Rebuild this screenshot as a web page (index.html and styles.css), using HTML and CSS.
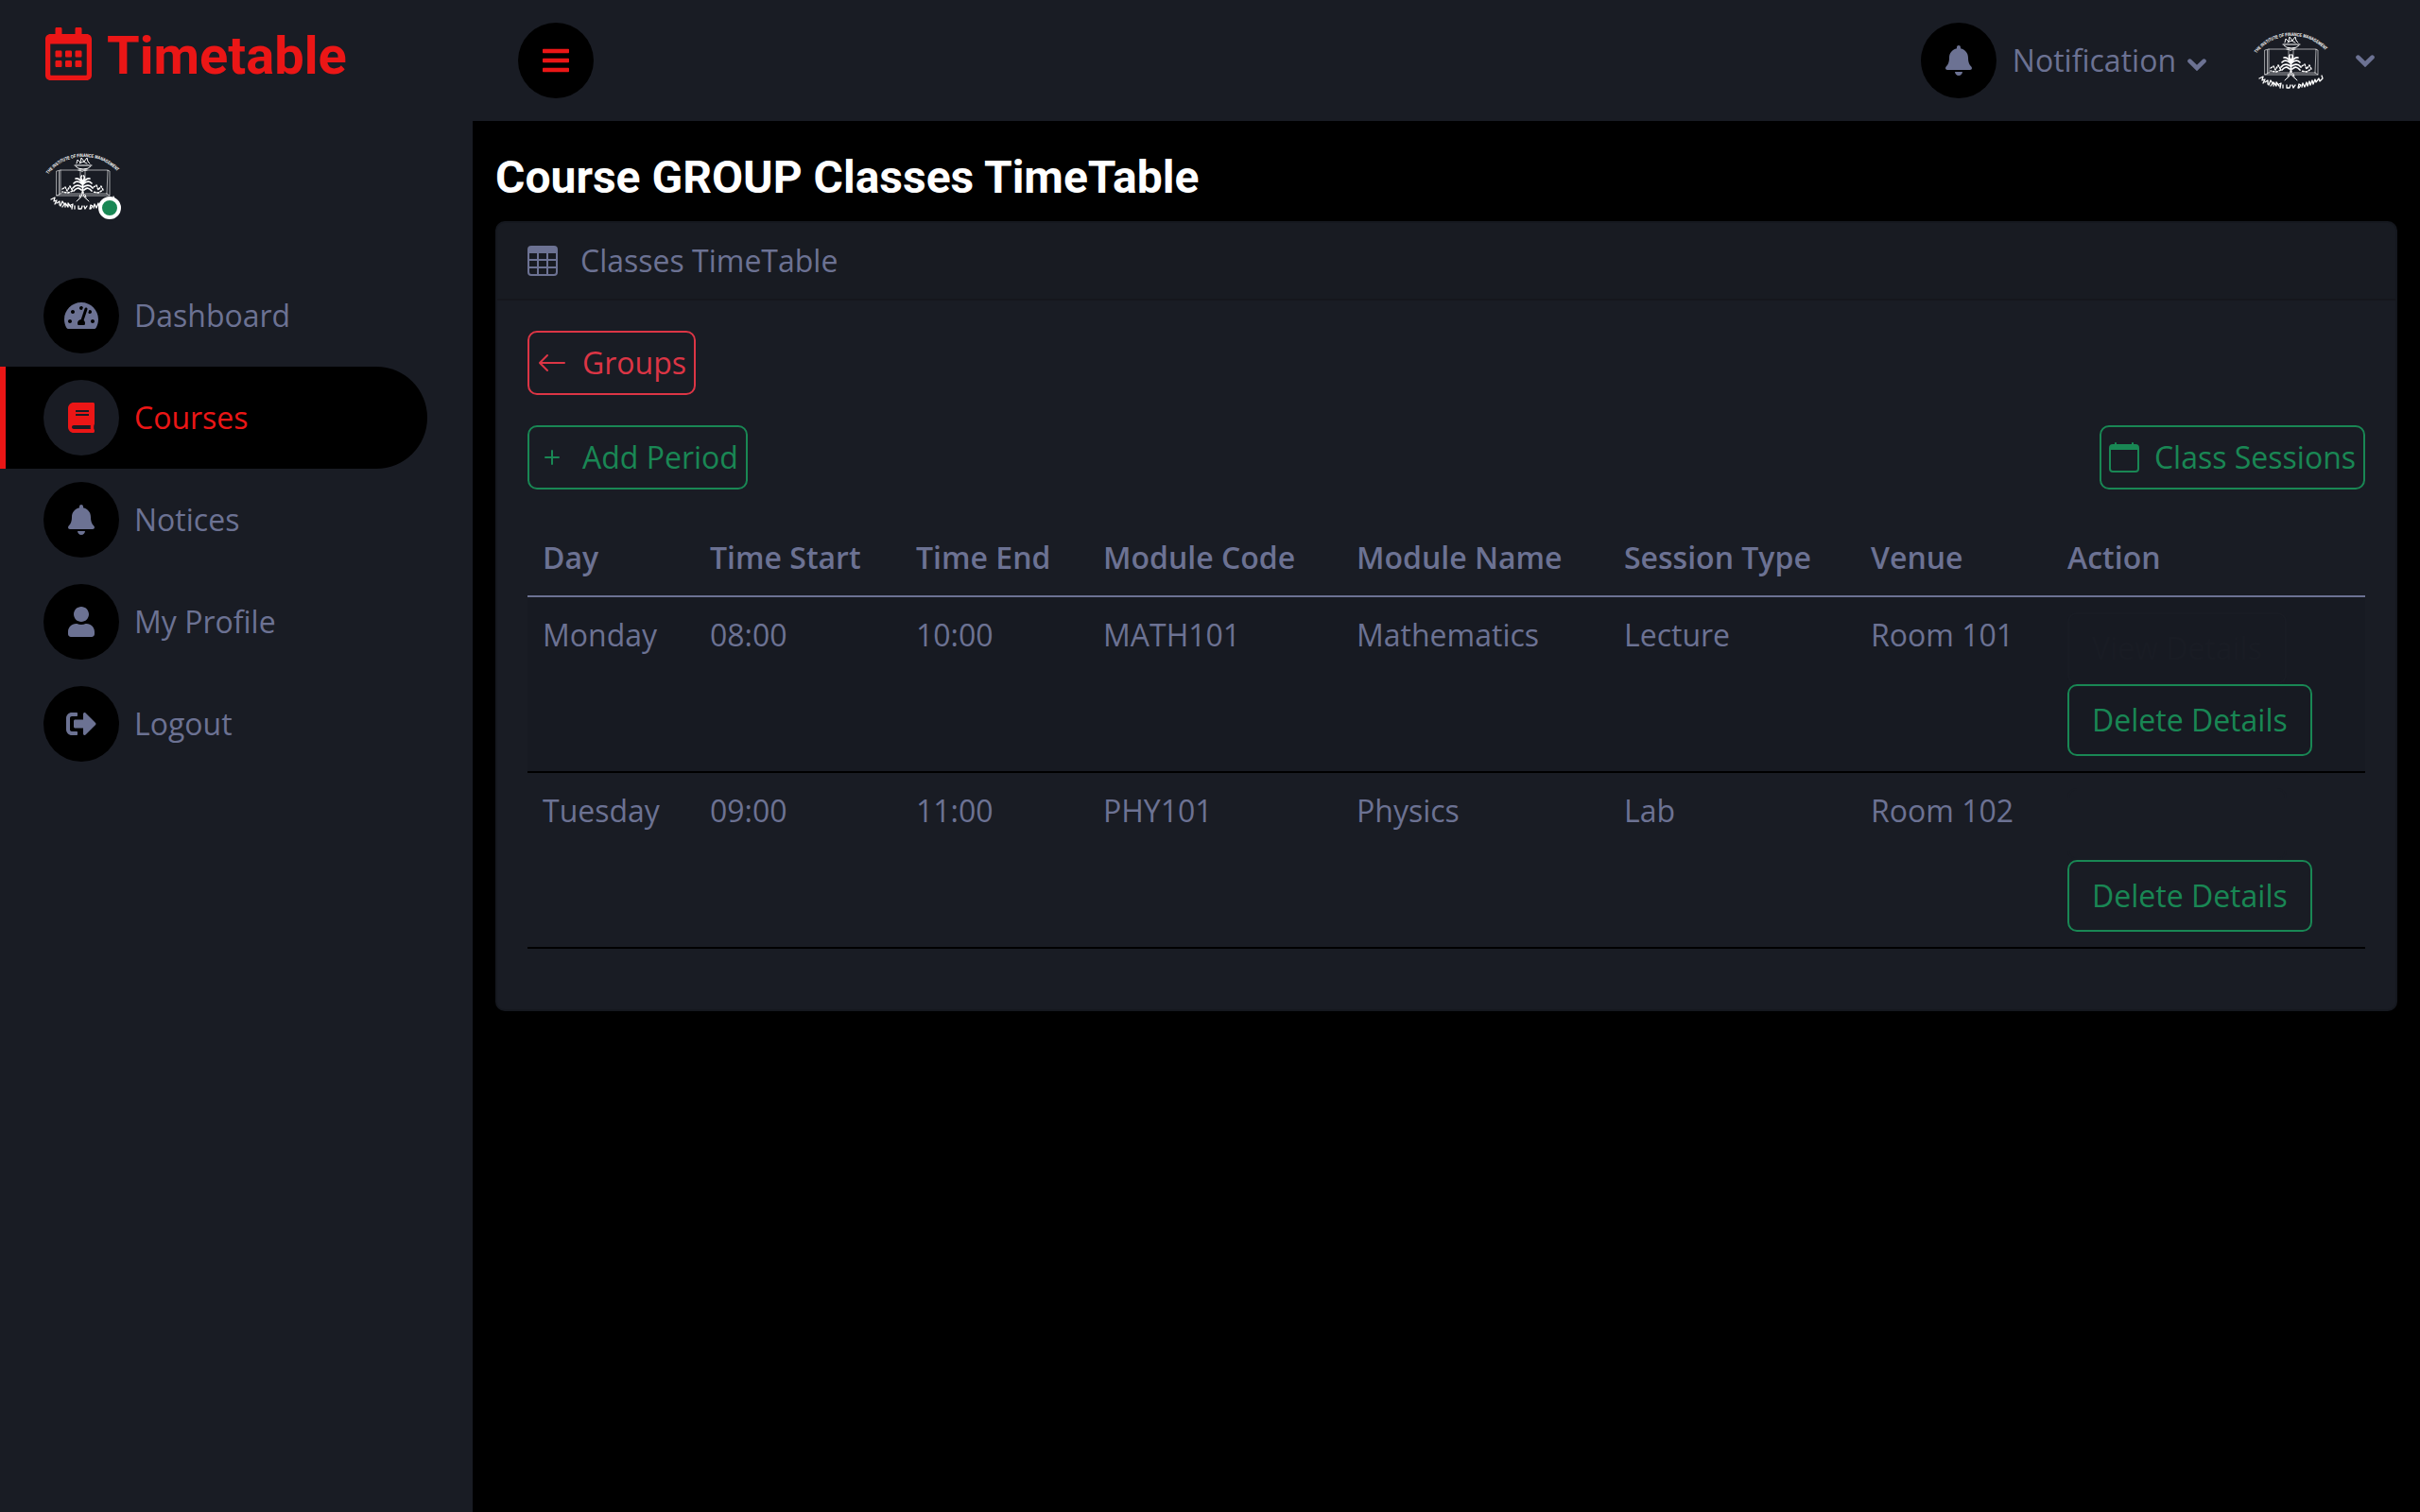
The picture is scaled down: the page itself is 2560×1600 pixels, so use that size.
FILE: index.html
```html
<!DOCTYPE html>
<html lang="en">
<head>
<meta charset="utf-8">
<title>Timetable</title>
<link rel="stylesheet" href="styles.css">
</head>
<body>
<svg class="defs" width="0" height="0" aria-hidden="true">
  <defs>
    <symbol id="bell" viewBox="0 0 448 512"><path d="M224 512c35.32 0 63.97-28.65 63.97-64H160.03c0 35.35 28.65 64 63.97 64zm215.39-149.71c-19.32-20.76-55.47-51.99-55.47-154.29 0-77.7-54.48-139.9-127.94-155.16V32c0-17.67-14.32-32-31.98-32s-31.98 14.33-31.98 32v20.84C118.56 68.1 64.08 130.3 64.08 208c0 102.3-36.15 133.53-55.47 154.29-6 6.45-8.66 14.16-8.61 21.71.11 16.4 12.98 32 32.1 32h383.8c19.12 0 32-15.6 32.1-32 .05-7.55-2.61-15.27-8.61-21.71z"/></symbol>
    <symbol id="chevron" viewBox="0 0 20 13"><path d="M2.500 2.700L10 10L17.500 2.700" fill="none" stroke="currentColor" stroke-width="4.600" stroke-linecap="round"/></symbol>
    <symbol id="crest" viewBox="0 0 80 80">
      <path id="crest-arc" d="M3 32.500Q18 14 40.500 14T79 32.500" fill="none"/>
      <text class="crest-text" textLength="83" lengthAdjust="spacingAndGlyphs"><textPath href="#crest-arc" textLength="83" lengthAdjust="spacingAndGlyphs">THE INSTITUTE OF FINANCE MANAGEMENT</textPath></text>
      <g fill="none" stroke="#fff" stroke-linecap="round" stroke-linejoin="round">
        <path stroke-width=".8" opacity=".75" d="M12 29l4-1h18q4 0 5 2q1-2 5-2h21l3 1v26H42l-2 1-2-1H12zM16 28v25M14.500 29v25M66 28l-1 25M16 53h22l2 1.500 2-1.500h23M12 55l4-2M68 55l-3-2M37 27v10M42 27v10"/>
        <path stroke-width="1" d="M31 23h18M32 24q2 3 8 3t8-3M33 21l1-4 3 3 1-5 3 4 3-4 1 4 2 2M36 21l4-2 4 2M35 28h9"/>
        <path stroke-width="1.700" d="M39.500 52V40M39 43q-5-5-9-1M39 41q-4-5-7-4M40 43q5-5 9-1M40 41q4-5 7-4M39 46q-6-4-10 1M40 46q6-4 10 1M38 49q-4-4-8 1M41 49q4-4 8 1M39.500 40q-3-4-1-6M39.500 40q3-4 1-6"/>
        <path stroke-width="1" d="M39 51q0 6-4 8l-2 2M40 51q0 6 4 8l2 2M37 54l-1 3M42 54l1 3"/>
        <path stroke-width="1.500" stroke-dasharray="1.600 1.800" d="M18 48l3-2 2 4 3-5 3 5-5 2-6-1M51 46l3-2 2 5 3-4 2 4-5 3-6-1"/>
        <path stroke-width="1.300" d="M6 59l4-2-1 4 3-1-2 4M12 63l3-2v4M16 66l2-5 2 3-2 3M21 67v-4l3 4v-4l3 4M27 65l2-1-1 5M31 66v3M35 66v3h3l1-3M41 66l1 3 2-3M47 69l1-4 2 1-2 3M51 68l1-4 2 4 2-5 1 4 2-5 1 4 2-5 1 4 2-5 1 3 3-4 1 3 3-3-1-3"/>
      </g>
    </symbol>
  </defs>
</svg>
<div class="layout">
  <aside class="sidebar">
    <h3 class="brand">
      <svg class="brand-icon" viewBox="0 0 448 512"><path d="M148 288h-40c-6.600 0-12-5.400-12-12v-40c0-6.600 5.400-12 12-12h40c6.600 0 12 5.400 12 12v40c0 6.600-5.400 12-12 12zm108-12v-40c0-6.600-5.400-12-12-12h-40c-6.600 0-12 5.400-12 12v40c0 6.600 5.400 12 12 12h40c6.600 0 12-5.400 12-12zm96 0v-40c0-6.600-5.400-12-12-12h-40c-6.600 0-12 5.400-12 12v40c0 6.600 5.400 12 12 12h40c6.600 0 12-5.400 12-12zm-96 96v-40c0-6.600-5.400-12-12-12h-40c-6.600 0-12 5.400-12 12v40c0 6.600 5.400 12 12 12h40c6.600 0 12-5.400 12-12zm-96 0v-40c0-6.600-5.400-12-12-12h-40c-6.600 0-12 5.400-12 12v40c0 6.600 5.400 12 12 12h40c6.600 0 12-5.400 12-12zm192 0v-40c0-6.600-5.400-12-12-12h-40c-6.600 0-12 5.400-12 12v40c0 6.600 5.400 12 12 12h40c6.600 0 12-5.400 12-12zm96-260v352c0 26.500-21.500 48-48 48H48c-26.500 0-48-21.500-48-48V112c0-26.500 21.500-48 48-48h48V12c0-6.600 5.400-12 12-12h40c6.600 0 12 5.400 12 12v52h128V12c0-6.600 5.400-12 12-12h40c6.600 0 12 5.400 12 12v52h48c26.500 0 48 21.500 48 48zm-48 346V160H48v298c0 3.300 2.700 6 6 6h340c3.300 0 6-2.700 6-6z"/></svg>
      <span>Timetable</span>
    </h3>
    <div class="user">
      <svg class="avatar"><use href="#crest"/></svg>
      <span class="status"></span>
    </div>
    <nav class="menu">
      <a class="menu-item"><span class="disc"><svg class="w36" viewBox="0 0 576 512"><path d="M288 32C128.940 32 0 160.940 0 320c0 52.800 14.250 102.260 39.060 144.800 5.610 9.620 16.300 15.200 27.440 15.200h443c11.140 0 21.830-5.580 27.440-15.200C561.750 422.260 576 372.800 576 320c0-159.060-128.940-288-288-288zm0 64c14.710 0 26.580 10.130 30.320 23.650-1.110 2.260-2.640 4.230-3.450 6.670l-9.220 27.670c-5.130 3.490-10.970 6.010-17.640 6.010-17.670 0-32-14.330-32-32S270.330 96 288 96zM96 384c-17.670 0-32-14.330-32-32s14.330-32 32-32 32 14.330 32 32-14.330 32-32 32zm48-160c-17.670 0-32-14.330-32-32s14.330-32 32-32 32 14.330 32 32-14.330 32-32 32zm246.770-72.410l-61.330 184C343.130 347.330 352 364.540 352 384c0 11.720-3.380 22.550-8.880 32H232.880c-5.500-9.450-8.880-20.280-8.880-32 0-33.940 26.500-61.430 59.900-63.590l61.340-184.010c4.170-12.560 17.730-19.450 30.360-15.170 12.570 4.190 19.350 17.790 15.170 30.360zm14.660 57.200l15.520-46.550c3.470-1.290 7.130-2.230 11.050-2.230 17.670 0 32 14.330 32 32s-14.330 32-32 32c-11.380-.01-20.890-6.280-26.570-15.220zM480 384c-17.670 0-32-14.330-32-32s14.330-32 32-32 32 14.330 32 32-14.330 32-32 32z"/></svg></span>Dashboard</a>
      <a class="menu-item active"><span class="disc"><svg class="w28" viewBox="0 0 448 512"><path d="M448 360V24c0-13.300-10.700-24-24-24H96C43 0 0 43 0 96v320c0 53 43 96 96 96h328c13.300 0 24-10.700 24-24v-16c0-7.500-3.500-14.300-8.900-18.700-4.200-15.400-4.200-59.300 0-74.700 5.400-4.300 8.900-11.100 8.900-18.600zM128 134c0-3.300 2.700-6 6-6h212c3.300 0 6 2.700 6 6v20c0 3.300-2.700 6-6 6H134c-3.300 0-6-2.700-6-6v-20zm0 64c0-3.300 2.700-6 6-6h212c3.300 0 6 2.700 6 6v20c0 3.300-2.700 6-6 6H134c-3.300 0-6-2.700-6-6v-20zm253.400 250H96c-17.700 0-32-14.300-32-32 0-17.600 14.400-32 32-32h285.400c-1.900 17.100-1.900 46.900 0 64z"/></svg></span>Courses</a>
      <a class="menu-item"><span class="disc"><svg class="w28"><use href="#bell"/></svg></span>Notices</a>
      <a class="menu-item"><span class="disc"><svg class="w28" viewBox="0 0 448 512"><path d="M224 256c70.700 0 128-57.300 128-128S294.700 0 224 0 96 57.300 96 128s57.300 128 128 128zm89.600 32h-16.700c-22.200 10.200-46.900 16-72.900 16s-50.600-5.800-72.900-16h-16.700C60.200 288 0 348.200 0 422.400V464c0 26.500 21.500 48 48 48h352c26.500 0 48-21.500 48-48v-41.600c0-74.200-60.200-134.400-134.400-134.400z"/></svg></span>My Profile</a>
      <a class="menu-item"><span class="disc"><svg class="w32" viewBox="0 0 512 512"><path d="M497 273L329 441c-15 15-41 4.500-41-17v-96H152c-13.300 0-24-10.700-24-24v-96c0-13.300 10.700-24 24-24h136V88c0-21.400 25.900-32 41-17l168 168c9.300 9.400 9.300 24.600 0 34zM192 436v-40c0-6.600-5.400-12-12-12H96c-17.700 0-32-14.300-32-32V160c0-17.700 14.300-32 32-32h84c6.600 0 12-5.400 12-12V76c0-6.600-5.400-12-12-12H96c-53 0-96 43-96 96v192c0 53 43 96 96 96h84c6.600 0 12-5.400 12-12z"/></svg></span>Logout</a>
    </nav>
  </aside>
  <div class="content">
    <header class="topbar">
      <span class="disc toggler"><svg class="w28" viewBox="0 0 448 512"><path d="M16 132h416c8.837 0 16-7.163 16-16V76c0-8.837-7.163-16-16-16H16C7.163 60 0 67.163 0 76v40c0 8.837 7.163 16 16 16zm0 160h416c8.837 0 16-7.163 16-16v-40c0-8.837-7.163-16-16-16H16c-8.837 0-16 7.163-16 16v40c0 8.837 7.163 16 16 16zm0 160h416c8.837 0 16-7.163 16-16v-40c0-8.837-7.163-16-16-16H16c-8.837 0-16 7.163-16 16v40c0 8.837 7.163 16 16 16z"/></svg></span>
      <div class="top-links">
        <a class="top-link"><span class="disc"><svg class="w28"><use href="#bell"/></svg></span><span class="top-label">Notification</span><svg class="caret caret-low"><use href="#chevron"/></svg></a>
        <a class="top-link"><svg class="avatar"><use href="#crest"/></svg><svg class="caret caret-user"><use href="#chevron"/></svg></a>
      </div>
    </header>
    <main class="main">
      <h4 class="title">Course GROUP Classes TimeTable</h4>
      <section class="card">
        <div class="card-header">
          <svg class="bi" viewBox="0 0 16 16"><path d="M0 2a2 2 0 0 1 2-2h12a2 2 0 0 1 2 2v12a2 2 0 0 1-2 2H2a2 2 0 0 1-2-2V2zm15 2h-4v3h4V4zm0 4h-4v3h4V8zm0 4h-4v3h3a1 1 0 0 0 1-1v-2zm-5 3v-3H6v3h4zm-5 0v-3H1v2a1 1 0 0 0 1 1h3zm-4-4h4V8H1v3zm0-4h4V4H1v3zm5-3v3h4V4H6zm4 4H6v3h4V8z"/></svg>
          <span>Classes TimeTable</span>
        </div>
        <div class="card-body">
          <div class="actions">
            <a class="btn btn-sm danger"><svg class="bi" viewBox="0 0 16 16"><path fill-rule="evenodd" d="M15 8a.5.500 0 0 0-.5-.5H2.707l3.147-3.146a.5.500 0 1 0-.708-.708l-4 4a.5.500 0 0 0 0 .708l4 4a.5.500 0 0 0 .708-.708L2.707 8.500H14.500A.5.500 0 0 0 15 8z"/></svg>Groups</a>
          </div>
          <div class="actions">
            <a class="btn btn-sm success"><svg class="bi" viewBox="0 0 16 16"><path d="M8 4a.5.500 0 0 1 .5.500v3h3a.5.500 0 0 1 0 1h-3v3a.5.500 0 0 1-1 0v-3h-3a.5.500 0 0 1 0-1h3v-3A.5.500 0 0 1 8 4z"/></svg>Add Period</a>
            <a class="btn btn-sm success"><svg class="bi" viewBox="0 0 16 16"><path d="M3.500 0a.5.500 0 0 1 .5.500V1h8V.5a.5.500 0 0 1 1 0V1h1a2 2 0 0 1 2 2v11a2 2 0 0 1-2 2H2a2 2 0 0 1-2-2V3a2 2 0 0 1 2-2h1V.5a.5.500 0 0 1 .5-.5zM1 4v10a1 1 0 0 0 1 1h12a1 1 0 0 0 1-1V4H1z"/></svg>Class Sessions</a>
          </div>
          <table class="table">
            <thead>
              <tr><th class="c-day">Day</th><th class="c-start">Time Start</th><th class="c-end">Time End</th><th class="c-code">Module Code</th><th class="c-name">Module Name</th><th class="c-type">Session Type</th><th class="c-venue">Venue</th><th>Action</th></tr>
            </thead>
            <tbody>
              <tr><td>Monday</td><td>08:00</td><td>10:00</td><td>MATH101</td><td>Mathematics</td><td>Lecture</td><td>Room 101</td><td><div class="row-actions"><a class="btn secondary">View Details</a><a class="btn success">Delete Details</a></div></td></tr>
              <tr><td>Tuesday</td><td>09:00</td><td>11:00</td><td>PHY101</td><td>Physics</td><td>Lab</td><td>Room 102</td><td><div class="row-actions"><a class="btn secondary">View Details</a><a class="btn success">Delete Details</a></div></td></tr>
            </tbody>
          </table>
        </div>
      </section>
    </main>
  </div>
</div>
</body>
</html>
```

FILE: styles.css
```css
:root {
  --primary: #eb1616;
  --secondary: #191c24;
  --light: #6c7293;
  --dark: #000;
  --success: #198754;
  --danger: #dc3545;
}

* { box-sizing: border-box; }

body {
  margin: 0;
  background: var(--dark);
  color: var(--light);
  font: 400 32px/48px "Open Sans", sans-serif;
}

svg { display: block; fill: currentColor; flex: none; }
.defs { position: absolute; }

.layout { display: flex; min-height: 1600px; }

/* Sidebar */
.sidebar { width: 500px; flex: none; background: var(--secondary); }

.brand {
  display: flex;
  align-items: center;
  gap: 16px;
  margin: 25px 0 0 48px;
  height: 68px;
  color: var(--primary);
  font: 700 56px/68px Roboto, sans-serif;
}
.brand-icon { width: 49px; height: 56px; margin-top: -4px; }

.user { position: relative; width: 80px; height: 80px; margin: 59px 0 48px 48px; }
.avatar { width: 80px; height: 80px; }
.crest-text { font: 700 5px "Liberation Sans", sans-serif; fill: #fff; }
.status {
  position: absolute;
  right: 0;
  bottom: 0;
  width: 24px;
  height: 24px;
  border: 4px solid #fff;
  border-radius: 50%;
  background: var(--success);
}

.menu { width: 452px; }
.menu-item {
  display: flex;
  align-items: center;
  gap: 16px;
  height: 108px;
  padding-left: 40px;
  border-left: 6px solid var(--secondary);
  border-radius: 0 54px 54px 0;
}
.menu-item.active { color: var(--primary); background: var(--dark); border-color: var(--primary); }

.disc {
  display: flex;
  align-items: center;
  justify-content: center;
  flex: none;
  width: 80px;
  height: 80px;
  border-radius: 50%;
  background: var(--dark);
}
.active .disc { background: var(--secondary); }
.w28 { width: 28px; height: 32px; }
.w32 { width: 32px; height: 32px; }
.w36 { width: 36px; height: 32px; }

/* Top bar */
.content { flex: 1; min-width: 0; }
.topbar {
  display: flex;
  align-items: center;
  justify-content: space-between;
  height: 128px;
  padding: 0 48px;
  background: var(--secondary);
}
.toggler { color: var(--primary); }
.top-links { display: flex; gap: 50px; }
.top-link { display: flex; align-items: center; }
.top-label { margin-left: 17px; }
.caret { width: 20px; height: 13px; }
.caret-low { margin: 8px 0 0 12px; }
.caret-user { margin-left: 28px; }

/* Main */
.main { padding: 31px 24px 0; }
.title { margin: 0 0 17px; color: #fff; font: 700 48px/58px Roboto, sans-serif; }

.card {
  border: 2px solid rgba(0, 0, 0, .125);
  border-radius: 10px;
  background: var(--secondary);
}
.card-header {
  display: flex;
  align-items: center;
  gap: 24px;
  padding: 16px 32px;
  border-bottom: 2px solid rgba(0, 0, 0, .125);
  background: rgba(0, 0, 0, .03);
}
.card-body { padding: 32px; }
.bi { width: 32px; height: 32px; }

.actions { display: flex; justify-content: space-between; margin-bottom: 32px; }
.btn {
  display: inline-flex;
  align-items: center;
  gap: 16px;
  padding: 12px 24px;
  border: 2px solid currentColor;
  border-radius: 10px;
  white-space: nowrap;
}
.btn-sm { padding: 8px; }
.danger { color: var(--danger); }
.success { color: var(--success); }
.secondary { color: var(--secondary); }

.table { width: 100%; margin-bottom: 32px; border-collapse: separate; border-spacing: 0; }
.table th, .table td {
  padding: 16px;
  text-align: left;
  vertical-align: top;
  white-space: nowrap;
}
.table th { font-weight: 600; border-bottom: 2px solid var(--light); }
.table td { border-bottom: 2px solid var(--dark); }
.table tbody tr:nth-child(odd) td { background: rgba(0, 0, 0, .05); }
.c-day { width: 177px; }
.c-start { width: 218px; }
.c-end { width: 198px; }
.c-code { width: 268px; }
.c-name { width: 283px; }
.c-type { width: 261px; }
.c-venue { width: 208px; }
.row-actions { display: flex; flex-direction: column; align-items: flex-start; }
```
